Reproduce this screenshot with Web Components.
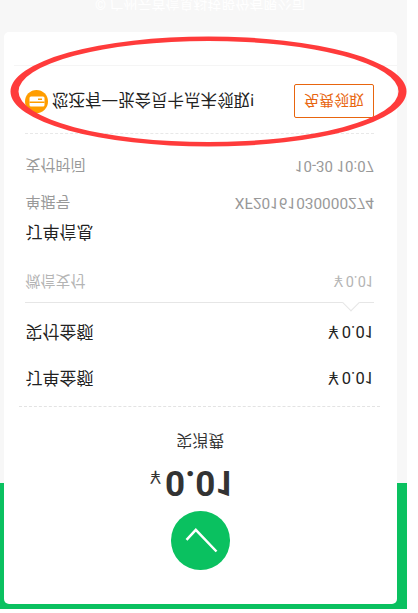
<!DOCTYPE html>
<html>
<head>
<meta charset="utf-8">
<style>
  html, body { margin: 0; background: #fff; }
  body { font-family: Roboto, "Noto Sans CJK SC", sans-serif; }
</style>
</head>
<body>
<pay-page>
  <pay-card>
    <pay-result heading="实消费" amount="0.01"></pay-result>
    <pay-line kind="dashed"></pay-line>
    <pay-row tone="dark" size="46" style="margin-top:4px"><span slot="label">订单金额</span>&#65509;0.01</pay-row>
    <pay-row tone="dark" size="46"><span slot="label">实付金额</span>&#65509;0.01</pay-row>
    <pay-line kind="notch"></pay-line>
    <pay-row tone="muted" size="37" style="margin-top:1px"><span slot="label">微信支付</span>&#65509;0.01</pay-row>
    <pay-row tone="dark" size="30" style="margin-top:16px"><span slot="label">订单信息</span></pay-row>
    <pay-row tone="grey" size="30" style="--value-size:15.4px"><span slot="label">单据号</span>XF20161030000274</pay-row>
    <pay-row tone="grey" size="30" style="margin-top:7px"><span slot="label">支付时间</span>10-30 10:07</pay-row>
    <pay-line kind="soft"></pay-line>
    <pay-notice action="免费领取">您还有一张会员卡点未领取!</pay-notice>
    <pay-line kind="faint"></pay-line>
  </pay-card>
  <span slot="footer">© 广州云首信息科技股份有限公司</span>
</pay-page>

<script>
// pay-page: whole screen, the shot is flipped upside down so it is done once here
customElements.define('pay-page', class extends HTMLElement {
  connectedCallback() {
    this.attachShadow({mode: 'open'});
    this.shadowRoot.innerHTML = `
    <style>
      :host {
        display: block;
        position: relative;
        width: 407px;
        height: 609px;
        overflow: hidden;
        transform: scaleY(-1);
        background: linear-gradient(#0ac160 126px, #f7f7f7 126px);
      }
      .wrap { padding: 5px 10.5px 0 4px; }
      .foot {
        text-align: center;
        margin-top: 20px;
        font-size: 14px;
        line-height: 16px;
        color: #fff;
      }
      svg { position: absolute; left: 0; top: 0; pointer-events: none; }
    </style>
    <div class="wrap">
      <slot></slot>
      <div class="foot"><slot name="footer"></slot></div>
    </div>
    <svg width="407" height="609" viewBox="0 0 407 609">
      <path fill="#ff3b3b" fill-rule="evenodd" d="M10.5 517.5a198 55 0 1 0 396 0a198 55 0 1 0 -396 0z M18.5 517.5a190 50.500 0 1 0 380 0a190 50.500 0 1 0 -380 0z"/>
    </svg>`;
  }
});

customElements.define('pay-card', class extends HTMLElement {
  connectedCallback() {
    this.attachShadow({mode: 'open'});
    this.shadowRoot.innerHTML = `
    <style>
      :host {
        display: block;
        height: 572px;
        background: #fff;
        border-radius: 5px;
        overflow: hidden;
      }
    </style>
    <slot></slot>`;
  }
});

customElements.define('pay-result', class extends HTMLElement {
  connectedCallback() {
    this.attachShadow({mode: 'open'});
    this.shadowRoot.innerHTML = `
    <style>
      :host {
        display: flex;
        flex-direction: column;
        align-items: center;
        padding-top: 34px;
        color: #333;
      }
      .ok { width: 58.5px; height: 58.5px; border-radius: 50%; background: #0ac160; }
      .ok svg { display: block; }
      .amount {
        margin-top: 9px;
        height: 40px;
        font-size: 35px;
        font-weight: bold;
        line-height: 40px;
      }
      .amount small { font-size: 17px; font-weight: normal; line-height: 0; margin-left: -18px; margin-right: 1px; }
      h2 {
        margin: 10px 0 21px;
        font-size: 16px;
        font-weight: normal;
        line-height: 24px;
      }
    </style>
    <div class="ok">
      <svg width="58.5" height="58.5" viewBox="0 0 58.5 58.5">
        <path d="M15.5 30.2L24.8 40.200L45.500 18.500" fill="none" stroke="#fff" stroke-width="2.5"/>
      </svg>
    </div>
    <div class="amount"><small>&#65509;</small>${this.getAttribute('amount')}</div>
    <h2>${this.getAttribute('heading')}</h2>`;
  }
});

customElements.define('pay-line', class extends HTMLElement {
  connectedCallback() {
    this.attachShadow({mode: 'open'});
    const kind = this.getAttribute('kind');
    this.shadowRoot.innerHTML = `
    <style>
      :host { display: block; position: relative; height: 1px; }
      :host([kind=dashed]) { margin: 0 16.5px 0 15px; border-top: 1px dashed #e3e3e3; height: 0; }
      :host([kind=soft]) { margin: 17px 22.500px 0 21px; border-top: 1px dashed #e8e8e8; height: 0; }
      :host([kind=notch]) { margin: 7px 22.5px 0 21px; background: #e6e6e6; }
      :host([kind=faint]) { margin: 18px 0 0 10px; background: #f5f5f5; }
      i {
        position: absolute;
        right: 17.5px;
        top: -6px;
        width: 11px;
        height: 11px;
        background: #fff;
        border-left: 1px solid #e6e6e6;
        border-top: 1px solid #e6e6e6;
        transform: rotate(45deg);
      }
    </style>
    ${kind === 'notch' ? '<i></i>' : ''}`;
  }
});

customElements.define('pay-row', class extends HTMLElement {
  connectedCallback() {
    this.attachShadow({mode: 'open'});
    this.shadowRoot.innerHTML = `
    <style>
      :host {
        display: flex;
        justify-content: space-between;
        align-items: center;
        height: ${this.getAttribute('size')}px;
        padding: 0 22.5px 0 21.5px;
      }
      :host([tone=dark]) { font-size: 17px; color: #222; --value-size: 16.5px; }
      :host([tone=grey]) { font-size: 15px; color: #999; }
      :host([tone=muted]) { font-size: 15px; color: #b4b4b4; --value-size: 14.5px; }
      .value { font-size: var(--value-size, 15px); }
    </style>
    <slot name="label"></slot>
    <span class="value"><slot></slot></span>`;
  }
});

customElements.define('pay-notice', class extends HTMLElement {
  connectedCallback() {
    this.attachShadow({mode: 'open'});
    this.shadowRoot.innerHTML = `
    <style>
      :host {
        display: flex;
        align-items: center;
        margin-top: 15px;
        padding: 0 22.5px 0 21px;
        font-size: 16.500px;
        color: #222;
      }
      svg { flex: none; margin: 0 4px 0 0; }
      .text { flex: 1; white-space: nowrap; }
      button {
        flex: none;
        width: 80px;
        height: 34px;
        padding: 0;
        background: #fff;
        border: 1px solid #e8650e;
        border-radius: 2px;
        color: #e8650e;
        font: 15px Roboto, "Noto Sans CJK SC", sans-serif;
      }
    </style>
    <svg width="23" height="23" viewBox="0 0 23 23">
      <circle cx="11.5" cy="11.5" r="11.5" fill="#ff9d00"/>
      <rect x="4.500" y="6.500" width="15" height="10" rx="1.500" fill="#fff"/>
      <rect x="4.500" y="10" width="15" height="1.500" fill="#ff9d00"/>
      <rect x="13" y="13" width="4" height="1.500" fill="#ff9d00"/>
    </svg>
    <span class="text"><slot></slot></span>
    <button>${this.getAttribute('action')}</button>`;
  }
});
</script>
</body>
</html>
